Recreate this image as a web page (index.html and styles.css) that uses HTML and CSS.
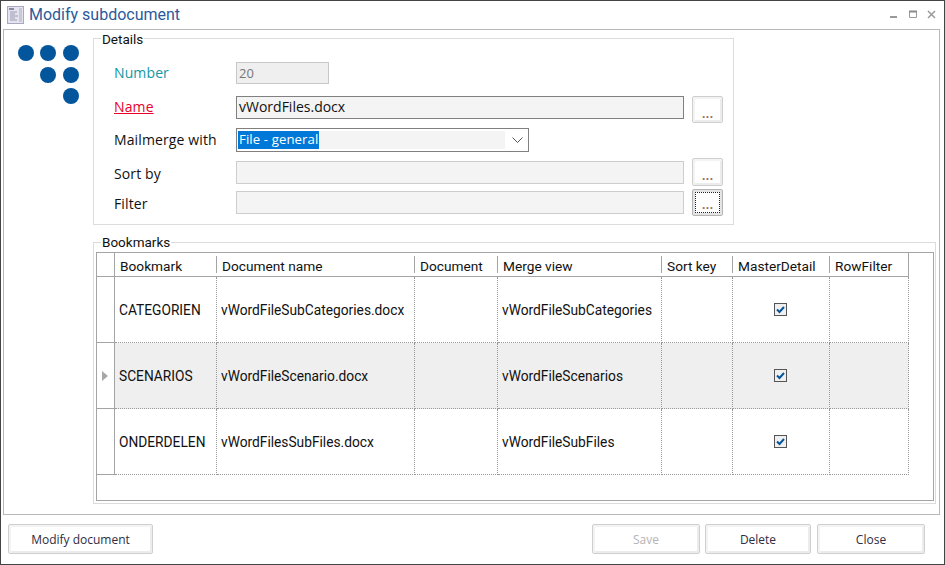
FILE: index.html
```html
<!DOCTYPE html>
<html lang="en">
<head>
<meta charset="utf-8">
<title>Modify subdocument</title>
<link rel="stylesheet" href="styles.css">
</head>
<body>
<div class="window">
  <header class="titlebar">
    <svg class="app-icon" width="17" height="18" viewBox="0 0 17 18"><rect x="0.5" y="0.5" width="16" height="17" fill="#e4e4ee" stroke="#a8a8c4"/><rect x="2" y="2" width="5" height="2" fill="#8a8aa8"/><path d="M3 6h7M3 8h5M3 10h8M3 12h5M3 14h7" stroke="#9a9ab4"/><rect x="12" y="2" width="3" height="14" fill="#c8c8d8"/></svg>
    <h1 class="title">Modify subdocument</h1>
    <div class="controls">
      <svg width="46" height="12" viewBox="0 0 46 12"><rect x="0" y="7" width="7" height="2" fill="#9a9a9a"/><path d="M19.5 2.5h7v6h-7z" fill="none" stroke="#9a9a9a"/><path d="M19 2.5h8" stroke="#8a8a8a" stroke-width="2"/><path d="M38 2l7 7M45 2l-7 7" stroke="#9a9a9a" stroke-width="1.5"/></svg>
    </div>
  </header>
  <main class="panel">
    <div class="logo-col">
      <svg class="logo" width="62" height="59" viewBox="0 0 62 59"><g fill="#03559c"><circle cx="8" cy="8" r="8"/><circle cx="30" cy="8" r="8"/><circle cx="53" cy="8" r="8"/><circle cx="30" cy="30" r="8"/><circle cx="53" cy="30" r="8"/><circle cx="53" cy="51" r="8"/></g></svg>
    </div>
    <div class="content">
      <section class="group details">
        <span class="legend">Details</span>
        <div class="row row-number"><label class="label label-teal">Number</label><div class="field field-number">20</div></div>
        <div class="row row-name"><label class="label label-red">Name</label><div class="field field-name">vWordFiles.docx</div><button class="dots">...</button></div>
        <div class="row row-merge"><label class="label">Mailmerge with</label>
          <div class="combo"><div class="combo-text"><span class="selected">File - general</span></div>
            <svg class="chev" width="11" height="6" viewBox="0 0 11 6"><path d="M0.5 0.5l5 5 5-5" fill="none" stroke="#555"/></svg>
          </div>
        </div>
        <div class="row row-sort"><label class="label">Sort by</label><div class="field field-empty"></div><button class="dots">...</button></div>
        <div class="row row-filter"><label class="label">Filter</label><div class="field field-empty field-filter"></div><button class="dots dots-focus"><span class="focus-ring">...</span></button></div>
      </section>
      <section class="group bookmarks">
        <span class="legend">Bookmarks</span>
        <div class="gridbox">
          <table class="grid">
            <colgroup><col class="c0"><col class="c1"><col class="c2"><col class="c3"><col class="c4"><col class="c5"><col class="c6"><col class="c7"></colgroup>
            <thead><tr><th class="rowhead"></th><th>Bookmark</th><th>Document name</th><th>Document</th><th>Merge view</th><th>Sort key</th><th>MasterDetail</th><th class="last">RowFilter</th></tr></thead>
            <tbody>
              <tr><td class="rowhead"></td><td>CATEGORIEN</td><td>vWordFileSubCategories.docx</td><td></td><td>vWordFileSubCategories</td><td></td><td class="check"><svg class="cb" width="13" height="13" viewBox="0 0 13 13"><rect x="0.5" y="0.5" width="12" height="12" fill="#f0f0f0" stroke="#555"/><path d="M3 6.5l2.5 2.5L10 4" fill="none" stroke="#03559c" stroke-width="2"/></svg></td><td></td></tr>
              <tr class="current"><td class="rowhead"><span class="arrow"></span></td><td>SCENARIOS</td><td>vWordFileScenario.docx</td><td></td><td>vWordFileScenarios</td><td></td><td class="check"><svg class="cb" width="13" height="13" viewBox="0 0 13 13"><rect x="0.5" y="0.5" width="12" height="12" fill="#f0f0f0" stroke="#555"/><path d="M3 6.5l2.5 2.5L10 4" fill="none" stroke="#03559c" stroke-width="2"/></svg></td><td></td></tr>
              <tr><td class="rowhead"></td><td>ONDERDELEN</td><td>vWordFilesSubFiles.docx</td><td></td><td>vWordFileSubFiles</td><td></td><td class="check"><svg class="cb" width="13" height="13" viewBox="0 0 13 13"><rect x="0.5" y="0.5" width="12" height="12" fill="#f0f0f0" stroke="#555"/><path d="M3 6.5l2.5 2.5L10 4" fill="none" stroke="#03559c" stroke-width="2"/></svg></td><td></td></tr>
            </tbody>
          </table>
        </div>
      </section>
    </div>
  </main>
  <footer class="footer">
    <button class="btn btn-modify">Modify document</button>
    <div class="footer-right">
      <button class="btn btn-save">Save</button>
      <button class="btn btn-delete">Delete</button>
      <button class="btn btn-close">Close</button>
    </div>
  </footer>
</div>
</body>
</html>
```
FILE: styles.css
```css
* { box-sizing: border-box; }
html, body { margin: 0; padding: 0; }
body { width: 945px; height: 565px; overflow: hidden; background: #fff; font-family: "Open Sans", "Noto Sans", sans-serif; color: #111; }
.window { width: 945px; height: 565px; border: 1px solid #444; display: flex; flex-direction: column; background: #fff; }
.titlebar { height: 28px; flex: none; display: flex; align-items: center; padding-left: 6px; }
.app-icon { flex: none; margin-top: -1px; }
.title { margin: -2px 0 0 5px; font-size: 16px; font-weight: 400; color: #2b5a9b; font-family: Roboto, sans-serif; }
.controls { margin-left: auto; margin-right: 8px; height: 12px; display: flex; }
.panel { margin: 0 4px 0 2px; height: 486px; flex: none; border: 1px solid #b8b8b8; display: flex; padding-top: 8px; }
.logo-col { width: 89px; flex: none; padding: 7px 0 0 14px; }
.logo { display: block; }
.content { flex: 1; min-width: 0; }
.group { position: relative; border: 1px solid #dcdcdc; }
.legend { position: absolute; left: 7px; top: -8px; background: #fff; padding: 0 1px; font-family: Roboto, sans-serif; font-size: 13.5px; line-height: 16px; color: #111; }
.bookmarks .legend { top: -9px; }
.details { width: 641px; height: 187px; padding: 23px 0 0 20px; }
.row { display: flex; align-items: center; }
.label { width: 122px; flex: none; font-size: 14px; letter-spacing: 0.12px; }
.label-teal { color: #1296a4; padding-bottom: 2px; }
.label-red { color: #e8002a; text-decoration: underline; }
.field { height: 23px; border: 1px solid #808080; background: #f4f4f4; font-size: 14px; line-height: 19px; padding-left: 2px; width: 448px; }
.field-number { width: 93px; height: 22px; border-color: #c8c8c8; background: #efefef; color: #777; font-size: 13px; line-height: 21px; }
.field-empty { border-color: #cdcdcd; }
.row-number { height: 22px; }
.row-name { height: 27px; margin-top: 12px; align-items: flex-start; }
.row-name .label { line-height: 22px; }
.row-merge { height: 24px; margin-top: 5px; }
.row-merge .label { padding-bottom: 2px; }
.row-sort { height: 28px; margin-top: 6px; }
.row-sort .label { padding-top: 2px; }
.row-filter { height: 27px; margin-top: 3px; }
.row-filter .label { padding-top: 2px; }
.dots { width: 31px; height: 100%; margin-left: 8px; flex: none; padding: 6px 0 0; font: 600 14px/16px "Open Sans", sans-serif; color: #9c6a4e; border: 1px solid #cfcfcf; border-radius: 2px; background: #fff; box-shadow: inset 2px 2px 0 #f3f3f3, inset -2px -2px 0 #ececec; }
.dots-focus { padding: 1px; background: #fff; box-shadow: inset 0 0 0 2px #e4e4e4; border-color: #b4b4b4; }
.focus-ring { display: block; margin: 1px; border: 1px dotted #222; line-height: 20px; height: 21px; padding-top: 1px; }
.combo { width: 293px; height: 24px; border: 1px solid #808080; background: #fff; display: flex; align-items: center; padding: 1px; }
.combo-text { width: 267px; height: 18px; background: #f4f4f4; font-size: 13.2px; line-height: 17px; letter-spacing: 0.1px; }
.selected { display: inline-block; background: #0078d7; color: #fff; padding: 0 1px; height: 18px; }
.chev { margin-left: 7px; }
.bookmarks { width: 843px; height: 262px; margin-top: 17px; padding: 9px 1px 0 2px; }
.gridbox { height: 249px; width: 838px; border: 1px solid #a4a4a4; }
.grid { border-collapse: separate; border-spacing: 0; table-layout: fixed; width: 812px; font-family: Roboto, sans-serif; font-size: 13.75px; }
.c0 { width: 18px; } .c1 { width: 102px; } .c2 { width: 198px; } .c3 { width: 83px; } .c4 { width: 164px; } .c5 { width: 71px; } .c6 { width: 97px; } .c7 { width: 79px; }
.grid th { position: relative; height: 24px; padding: 2px 0 0 5px; text-align: left; font-weight: 400; font-size: 13.7px; border-bottom: 1px solid #a4a4a4; white-space: nowrap; }
.grid th::after { content: ""; position: absolute; right: 0; top: 3px; bottom: 3px; width: 1px; background: #a4a4a4; }
.grid th.rowhead::after { top: 0; bottom: 0; }
.grid th.last::after { top: 0; bottom: 0; }
.grid td { height: 66px; padding: 0 0 0 4px; border-right: 1px dotted #999; border-bottom: 1px dotted #999; white-space: nowrap; }
.grid td.rowhead { border-right: 1px solid #a4a4a4; border-bottom: 1px solid #a4a4a4; padding: 0 0 0 5px; background: #fff; }
.current td { background: #efefef; }
.arrow { display: block; width: 0; height: 0; border-left: 6px solid #a8a8a8; border-top: 5px solid transparent; border-bottom: 5px solid transparent; }
.check { text-align: center; }
.grid td.check { padding: 0 2px 0 0; }
.cb { display: block; margin: -1px auto 0; }
.footer { flex: 1; display: flex; justify-content: space-between; padding: 9px 19px 0 7px; }
.footer-right { display: flex; gap: 5px; }
.btn { height: 30px; font: 12px "Open Sans", sans-serif; color: #2d2d44; background: #fff; border: 1px solid #cfcfcf; border-radius: 2px; box-shadow: inset 2px 2px 0 #f3f3f3, inset -2px -2px 0 #ececec; padding: 0; }
.btn-modify { width: 145px; }
.btn-save { width: 108px; color: #b5b5b5; }
.btn-delete { width: 106px; }
.btn-close { width: 108px; margin-left: 1px; }
```
